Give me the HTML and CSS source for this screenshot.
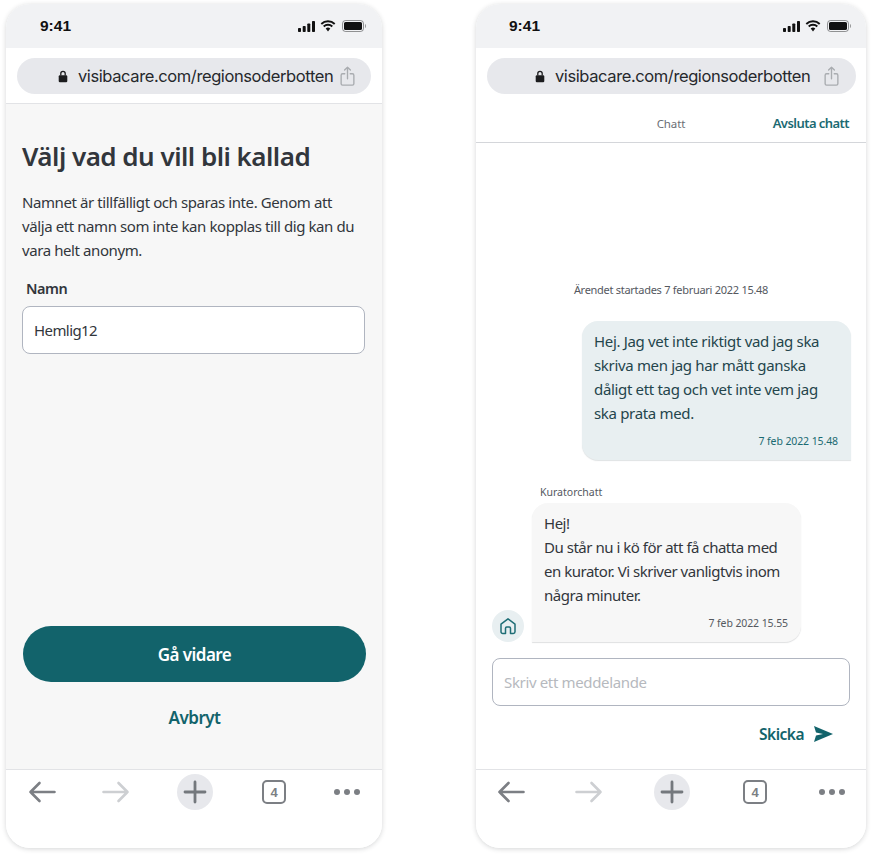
FILE: index.html
```html
<!DOCTYPE html>
<html lang="sv">
<head>
<meta charset="utf-8">
<title>Visiba Care</title>
<link rel="stylesheet" href="styles.css">
</head>
<body>
<svg class="defs" width="0" height="0">
  <symbol id="signal" viewBox="0 0 17 11"><rect x="0" y="7" width="3" height="4" rx=".8"/><rect x="4.7" y="5" width="3" height="6" rx=".8"/><rect x="9.3" y="2.5" width="3" height="8.5" rx=".8"/><rect x="14" y="0" width="3" height="11" rx=".8"/></symbol>
  <symbol id="wifi" viewBox="0 0 16 12"><path d="M1.300 4A9.600 9.600 0 0 1 14.700 4M3.700 6.500a6.200 6.200 0 0 1 8.600 0" fill="none" stroke="#111" stroke-width="1.900"/><path d="M5.700 8.500a3.300 3.300 0 0 1 4.600 0L8 11.400z"/></symbol>
  <symbol id="battery" viewBox="0 0 24 12"><rect x=".5" y=".5" width="21" height="11" rx="3" fill="none" stroke="#000" stroke-opacity=".4"/><rect x="2" y="2" width="18" height="8" rx="1.600"/><path d="M23 4v4c.7-.3 1-1.100 1-2s-.3-1.700-1-2z" fill-opacity=".4"/></symbol>
  <symbol id="lock" viewBox="0 0 10 13"><path d="M2.800 5.500V3.600a2.200 2.200 0 0 1 4.400 0v1.900" fill="none" stroke="#1c1c1e" stroke-width="1.300"/><rect x=".7" y="5.300" width="8.600" height="7" rx="1.200" fill="#1c1c1e"/></symbol>
  <symbol id="share" viewBox="0 0 16 22"><path d="M5 8.500H2.600A1.600 1.600 0 0 0 1 10.100v9.300A1.600 1.600 0 0 0 2.600 21h10.800a1.600 1.600 0 0 0 1.600-1.600v-9.300a1.600 1.600 0 0 0-1.600-1.600H11M8 14V1.500M4.800 4.500 8 1.300l3.200 3.200" fill="none" stroke="currentColor" stroke-width="1.500" stroke-linecap="round" stroke-linejoin="round"/></symbol>
  <symbol id="arrow-left" viewBox="0 0 28 22"><path d="M26.500 11H2.500M11.500 2 2.500 11l9 9" fill="none" stroke="currentColor" stroke-width="2.600" stroke-linecap="round" stroke-linejoin="round"/></symbol>
  <symbol id="arrow-right" viewBox="0 0 28 22"><path d="M1.500 11h24M16.500 2l9 9-9 9" fill="none" stroke="currentColor" stroke-width="2.600" stroke-linecap="round" stroke-linejoin="round"/></symbol>
  <symbol id="plus" viewBox="0 0 24 24"><path d="M12 2v20M2 12h20" fill="none" stroke="currentColor" stroke-width="2.800" stroke-linecap="round"/></symbol>
  <symbol id="house" viewBox="0 0 18 18"><path d="M2 7.200 9 1.800l7 5.400v7.600a1.700 1.700 0 0 1-1.700 1.700h-2.800v-5.300a1.200 1.200 0 0 0-1.200-1.200H7.700a1.200 1.200 0 0 0-1.200 1.200v5.300H3.700A1.700 1.700 0 0 1 2 14.800z" fill="none" stroke="currentColor" stroke-width="1.500" stroke-linejoin="round"/></symbol>
  <symbol id="send" viewBox="0 0 19 16"><path d="M0 0 19 8 0 16l2-6.500L9 8 2 6.500z"/></symbol>
</svg>

<main class="screens">
  <section class="phone phone-one">
    <div class="status">
      <span class="clock">9:41</span>
      <div class="status-icons">
        <svg class="i-signal"><use href="#signal"/></svg>
        <svg class="i-wifi"><use href="#wifi"/></svg>
        <svg class="i-battery"><use href="#battery"/></svg>
      </div>
    </div>
    <div class="urlbar">
      <div class="pill">
        <svg class="i-lock"><use href="#lock"/></svg>
        <span class="url">visibacare.com/regionsoderbotten</span>
        <svg class="i-share"><use href="#share"/></svg>
      </div>
    </div>
    <div class="form-page">
      <h1 class="title">Välj vad du vill bli kallad</h1>
      <p class="lead">Namnet är tillfälligt och sparas inte. Genom att välja ett namn som inte kan kopplas till dig kan du vara helt anonym.</p>
      <div class="field-label">Namn</div>
      <div class="field">Hemlig12</div>
      <div class="actions">
        <div class="primary">Gå vidare</div>
        <div class="cancel">Avbryt</div>
      </div>
    </div>
    <nav class="toolbar">
      <svg class="i-arrow tool-dark"><use href="#arrow-left"/></svg>
      <svg class="i-arrow tool-light"><use href="#arrow-right"/></svg>
      <span class="plus-btn"><svg class="i-plus"><use href="#plus"/></svg></span>
      <span class="tabs">4</span>
      <span class="dots"><i></i><i></i><i></i></span>
    </nav>
  </section>

  <section class="phone phone-two">
    <div class="status">
      <span class="clock">9:41</span>
      <div class="status-icons">
        <svg class="i-signal"><use href="#signal"/></svg>
        <svg class="i-wifi"><use href="#wifi"/></svg>
        <svg class="i-battery"><use href="#battery"/></svg>
      </div>
    </div>
    <div class="urlbar">
      <div class="pill">
        <svg class="i-lock"><use href="#lock"/></svg>
        <span class="url">visibacare.com/regionsoderbotten</span>
        <svg class="i-share"><use href="#share"/></svg>
      </div>
    </div>
    <header class="chat-head">
      <span class="chat-title">Chatt</span>
      <span class="chat-end">Avsluta chatt</span>
    </header>
    <div class="chat">
      <div class="started">Ärendet startades 7 februari 2022 15.48</div>
      <div class="bubble bubble-out">
        <p class="msg">Hej. Jag vet inte riktigt vad jag ska skriva men jag har mått ganska dåligt ett tag och vet inte vem jag ska prata med.</p>
        <div class="stamp stamp-out">7 feb 2022 15.48</div>
      </div>
      <div class="sender">Kuratorchatt</div>
      <div class="incoming">
        <span class="avatar"><svg class="i-house"><use href="#house"/></svg></span>
        <div class="bubble bubble-in">
          <p class="msg">Hej!<br>Du står nu i kö för att få chatta med en kurator. Vi skriver vanligtvis inom några minuter.</p>
          <div class="stamp">7 feb 2022 15.55</div>
        </div>
      </div>
      <div class="compose">Skriv ett meddelande</div>
      <div class="send">Skicka <svg class="i-send"><use href="#send"/></svg></div>
    </div>
    <nav class="toolbar">
      <svg class="i-arrow tool-dark"><use href="#arrow-left"/></svg>
      <svg class="i-arrow tool-light"><use href="#arrow-right"/></svg>
      <span class="plus-btn"><svg class="i-plus"><use href="#plus"/></svg></span>
      <span class="tabs">4</span>
      <span class="dots"><i></i><i></i><i></i></span>
    </nav>
  </section>
</main>
</body>
</html>
```
FILE: styles.css
```css
* { box-sizing: border-box; }
html, body { margin: 0; padding: 0; background: #fff; }
body { width: 872px; height: 856px; overflow: hidden; font-family: "Noto Sans", sans-serif; color: #32363c; }
.defs { display: block; height: 0; }
.screens { display: flex; gap: 94px; padding: 4px 0 0 6px; }
.phone { height: 844px; background: #fff; border-radius: 24px; box-shadow: 0 1px 5px rgba(40, 44, 52, .2); display: flex; flex-direction: column; overflow: hidden; }
.phone-one { width: 376px; }
.phone-two { width: 390px; }

.status { height: 44px; flex: none; background: #f1f2f4; display: flex; align-items: center; justify-content: space-between; }
.phone-one .status { padding: 0 16px 0 34px; }
.phone-two .status { padding: 0 15px 0 33px; }
.clock { font: 700 15.500px "Liberation Sans", sans-serif; color: #111; }
.status-icons { display: flex; align-items: center; gap: 5px; }
.i-signal { width: 17px; height: 11px; fill: #111; }
.i-wifi { width: 16px; height: 12px; fill: #111; }
.i-battery { width: 24px; height: 12px; fill: #111; margin-left: 1px; }

.urlbar { height: 56px; flex: none; padding-top: 10px; }
.phone-one .urlbar { padding-left: 11px; padding-right: 11px; border-bottom: 1px solid #e2e3e6; }
.phone-two .urlbar { padding-left: 11px; padding-right: 10px; }
.pill { height: 36px; border-radius: 18px; background: #e7e8ec; display: flex; align-items: center; }
.phone-one .pill { padding-left: 41px; }
.phone-two .pill { padding-left: 48px; }
.i-lock { width: 10px; height: 13px; flex: none; }
.url { font: 400 16.500px Inter, sans-serif; letter-spacing: -.4px; color: #26282c; margin-left: 10px; white-space: nowrap; width: 255px; }
.i-share { width: 15px; height: 20px; color: #a9acb0; flex: none; }
.phone-one .i-share { margin-left: 7px; }
.phone-two .i-share { margin-left: 14px; }

.form-page { flex: 1; background: #f7f7f7; padding: 35px 17px 0 16px; display: flex; flex-direction: column; }
.title { margin: 0; font-size: 26px; line-height: 34px; font-weight: 600; color: #32363c; letter-spacing: -.52px; white-space: nowrap; }
.lead { margin: 17px 0 0; font-size: 15px; line-height: 24px; letter-spacing: -.41px; color: #32363c; }
.field-label { margin: 16px 0 0 4px; font-size: 14.500px; line-height: 20px; font-weight: 600; letter-spacing: -.5px; }
.field { margin-top: 8px; height: 48px; background: #fff; border: 1px solid #b0b5c0; border-radius: 8px; padding: 0 11px; display: flex; align-items: center; font-size: 15px; letter-spacing: -.58px; }
.actions { margin-top: auto; padding: 0 0 39px 1px; margin-right: -1px; display: flex; flex-direction: column; align-items: stretch; }
.primary { height: 56px; border-radius: 28px; background: #12636b; color: #fff; font-size: 17px; font-weight: 600; display: flex; align-items: center; justify-content: center; letter-spacing: -.55px; }
.cancel { margin-top: 24px; height: 24px; line-height: 24px; text-align: center; font-size: 17px; font-weight: 600; color: #12636b; letter-spacing: -.5px; }

.toolbar { height: 79px; flex: none; background: #fff; border-top: 1px solid #e2e3e6; display: flex; align-items: flex-start; }
.phone-one .toolbar { padding: 4px 0 0 22px; gap: 46px; }
.phone-two .toolbar { padding: 4px 0 0 21px; gap: 50px; }
.i-arrow { width: 28px; height: 22px; margin-top: 7px; }
.tool-dark { color: #7c7f84; }
.tool-light { color: #cdcfd2; }
.plus-btn { width: 36px; height: 36px; margin-left: 1px; border-radius: 50%; background: #e7e8ec; display: flex; align-items: center; justify-content: center; color: #74787d; }
.i-plus { width: 24px; height: 24px; }
.tabs { width: 24px; height: 24px; margin: 6px 0 0 3px; border: 2px solid #7c7f84; border-radius: 5px; font: 700 13px "Liberation Sans", sans-serif; color: #7c7f84; display: flex; align-items: center; justify-content: center; }
.dots { display: flex; gap: 4px; margin: 15px 0 0 2px; width: 26px; }
.dots i { width: 6px; height: 6px; border-radius: 50%; background: #7c7f84; display: block; }

.chat-head { height: 39px; flex: none; border-bottom: 1px solid #d4d6da; display: flex; align-items: center; position: relative; }
.chat-title { font-size: 11.500px; color: #6a6e74; flex: 1; text-align: center; letter-spacing: -.1px; }
.chat-end { position: absolute; right: 17px; font-size: 13px; font-weight: 600; color: #1b6a72; letter-spacing: -.55px; }
.chat { flex: 1; display: flex; flex-direction: column; padding: 0 16px; justify-content: flex-end; }
.started { text-align: center; font-size: 11px; line-height: 16px; color: #55595f; letter-spacing: -.28px; margin-bottom: 23px; }
.bubble { width: 269px; padding: 8px 13px 12px 12px; }
.bubble-out { align-self: flex-end; margin-right: -1px; background: #e8eff1; border-radius: 16px 16px 0 16px; box-shadow: 0 1px 1px rgba(40, 60, 70, .15); color: #24454c; }
.bubble-out .msg { letter-spacing: -.33px; }
.bubble-in { background: #f7f7f7; border-radius: 16px 16px 16px 0; box-shadow: 0 1px 1px rgba(40, 44, 52, .15); }
.bubble-in .msg { letter-spacing: -.48px; }
.msg { margin: 0; font-size: 15px; line-height: 24px; }
.stamp { margin-top: 9px; text-align: right; font-size: 10.500px; line-height: 14px; color: #55595f; letter-spacing: -.1px; }
.stamp-out { color: #1b6a72; }
.sender { margin: 25px 0 0 48px; font-size: 10.500px; line-height: 14px; color: #55595f; }
.incoming { margin-top: 4px; display: flex; align-items: flex-end; gap: 8px; }
.avatar { width: 32px; height: 32px; border-radius: 50%; background: #e8eff1; color: #1f6e76; display: flex; align-items: center; justify-content: center; flex: none; }
.i-house { width: 18px; height: 18px; }
.compose { margin: 16px 0 0; height: 48px; border: 1px solid #b0b5c0; border-radius: 8px; padding: 0 11px; display: flex; align-items: center; font-size: 15px; color: #b6b9be; letter-spacing: -.35px; }
.send { margin: 16px 17px 23px 0; height: 24px; display: flex; align-items: center; justify-content: flex-end; gap: 10px; font-size: 15.500px; font-weight: 600; color: #12636b; letter-spacing: -.5px; }
.i-send { width: 19px; height: 16px; fill: #12636b; }
```
